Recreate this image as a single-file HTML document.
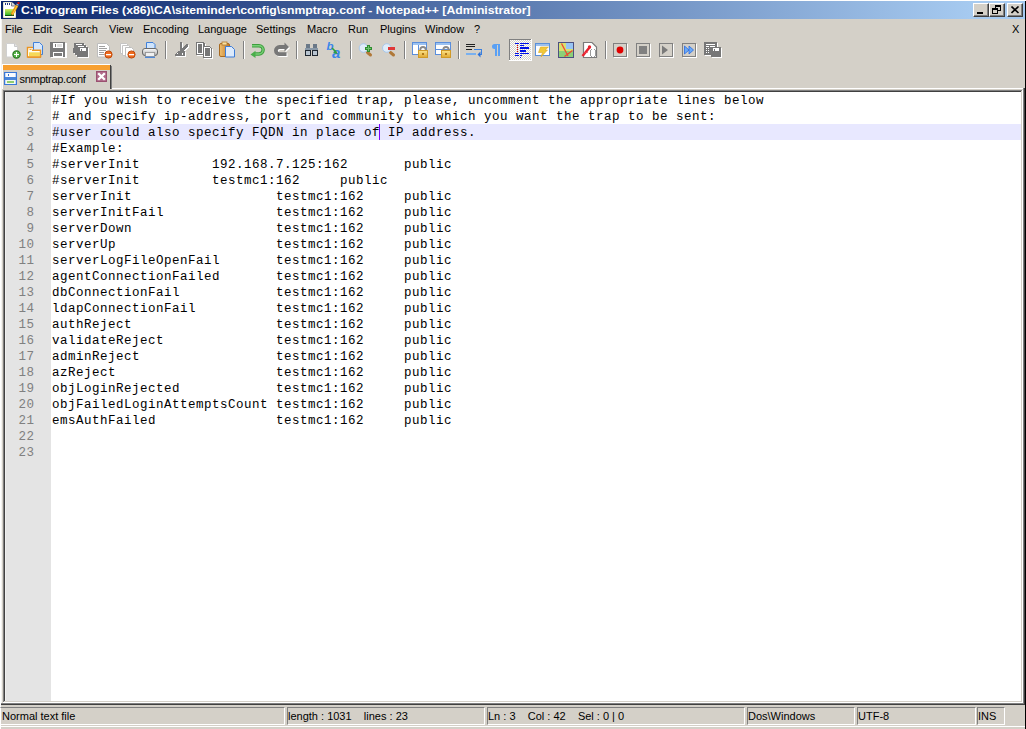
<!DOCTYPE html>
<html><head><meta charset="utf-8">
<style>
*{margin:0;padding:0;box-sizing:border-box}
html,body{width:1026px;height:729px;overflow:hidden;background:#D4D0C8;font-family:"Liberation Sans",sans-serif;position:relative}
.a{position:absolute}
#title{left:1px;top:1px;width:1024px;height:18px;background:linear-gradient(to right,#0A246A 0px,#A6CAF0 970px)}
#ttext{left:21px;top:3px;color:#fff;font-weight:bold;font-size:11px;white-space:pre;line-height:14px;transform:scaleX(1.11);transform-origin:0 0}
.wb{top:3px;width:16px;height:14px;background:#D4D0C8;border-top:1px solid #fff;border-left:1px solid #fff;border-right:1px solid #404040;border-bottom:1px solid #404040;box-shadow:inset -1px -1px 0 #808080}
.menu{top:22px;font-size:11px;line-height:14px;color:#000;white-space:pre}
#content{left:5px;top:92px;width:1016px;height:609px;background:#fff;overflow:hidden}
#margin{left:0;top:0;width:46px;height:609px;background:#E4E4E4}
#hl{left:47px;top:32px;width:969px;height:16px;background:#E8E8FF}
#nums{left:0;top:1px;width:29.5px;text-align:right;font-family:"Liberation Mono",monospace;font-size:12.5px;letter-spacing:0.5px;line-height:16px;color:#808080;white-space:pre}
#code{left:47px;top:1px;font-family:"Liberation Mono",monospace;font-size:12.5px;letter-spacing:0.5px;line-height:16px;color:#000;white-space:pre}
#caret{left:374px;top:32px;width:1px;height:16px;background:#8000FF}
.sp{top:707px;height:18px;border-top:1px solid #808080;border-left:1px solid #808080;border-right:1px solid #fff;border-bottom:1px solid #fff;font-size:11px;line-height:16px;white-space:pre;padding-left:0}
</style></head><body>
<div class="a" style="left:0px;top:0px;width:1026px;height:1px;background:#fff"></div>
<div class="a" style="left:0px;top:0px;width:1px;height:729px;background:#fff"></div>
<div class="a" style="left:1px;top:19px;width:1px;height:684px;background:#F4F3F0"></div>
<div class="a" style="left:1025px;top:1px;width:1px;height:728px;background:#000"></div>
<div class="a" style="left:112px;top:88px;width:911px;height:1px;background:#fff"></div>
<div class="a" style="left:3px;top:90px;width:1020px;height:1px;background:#808080"></div>
<div class="a" style="left:3px;top:90px;width:1px;height:613px;background:#808080"></div>
<div class="a" style="left:4px;top:91px;width:1018px;height:1px;background:#404040"></div>
<div class="a" style="left:4px;top:91px;width:1px;height:611px;background:#404040"></div>
<div class="a" style="left:1021px;top:91px;width:1px;height:611px;background:#D4D0C8"></div>
<div class="a" style="left:4px;top:701px;width:1018px;height:1px;background:#D4D0C8"></div>
<div class="a" style="left:1022px;top:90px;width:1px;height:613px;background:#fff"></div>
<div class="a" style="left:3px;top:702px;width:1020px;height:1px;background:#fff"></div>
<div class="a" style="left:1023px;top:88px;width:1px;height:616px;background:#808080"></div>
<div class="a" style="left:1024px;top:88px;width:1px;height:617px;background:#404040"></div>
<div class="a" style="left:1px;top:703px;width:1023px;height:1px;background:#808080"></div>
<div class="a" style="left:1px;top:704px;width:1024px;height:1px;background:#404040"></div>
<div class="a" style="left:1px;top:726px;width:1024px;height:1px;background:#fff"></div>
<div class="a" id="title"></div>
<svg class="a" style="left:3px;top:2px" width="17" height="16">
<defs><linearGradient id="ag" x1="0" y1="0" x2="0" y2="1"><stop offset="0" stop-color="#D8EC60"/><stop offset="1" stop-color="#38B828"/></linearGradient></defs>
<path d="M0.5 0.5h8.5l3.5 3.5v11.5h-12z" fill="#fff" stroke="#E8E8D0"/>
<path d="M8.5 0.5v3.5h3.5" fill="#D8D8E0" stroke="#606070" stroke-width="0.8"/>
<g shape-rendering="crispEdges"><rect x="2" y="7" width="9" height="6" fill="url(#ag)"/><rect x="2" y="13" width="9" height="1" fill="#0E5A0E"/>
<g fill="#283A80"><rect x="2" y="1" width="1" height="2"/><rect x="4" y="1" width="1" height="2"/><rect x="6" y="1" width="1" height="2"/></g></g>
<path d="M8.8 12.8l5.2-9.3" stroke="#E89A10" stroke-width="2.8"/><path d="M9.3 12.5l4.9-8.8" stroke="#FFD040" stroke-width="1"/>
<path d="M14.2 3.2l0.6-1" stroke="#A0B0C8" stroke-width="2.4"/>
<rect x="14.5" y="0" width="2" height="2" fill="#D01010"/>
<path d="M8.3 13.6l0.6-1.2" stroke="#604020" stroke-width="1.2"/>
</svg>
<div class="a" id="ttext">C:\Program Files (x86)\CA\siteminder\config\snmptrap.conf - Notepad++ [Administrator]</div>
<div class="a wb" style="left:973px"><div class="a" style="left:3px;top:8px;width:6px;height:2px;background:#000"></div></div>
<div class="a wb" style="left:989px">
<div class="a" style="left:5px;top:1px;width:6px;height:6px;border:1px solid #000;border-top-width:2px"></div>
<div class="a" style="left:2px;top:4px;width:6px;height:6px;border:1px solid #000;border-top-width:2px;background:#D4D0C8"></div>
</div>
<div class="a wb" style="left:1007px"><svg class="a" style="left:3px;top:2px" width="9" height="8"><path d="M0.5 0.5l7 6.5M7.5 0.5l-7 6.5" stroke="#000" stroke-width="1.6"/></svg></div>
<div class="a menu" style="left:5px">File</div>
<div class="a menu" style="left:33px">Edit</div>
<div class="a menu" style="left:63px">Search</div>
<div class="a menu" style="left:109px">View</div>
<div class="a menu" style="left:143px">Encoding</div>
<div class="a menu" style="left:198px">Language</div>
<div class="a menu" style="left:256px">Settings</div>
<div class="a menu" style="left:307px">Macro</div>
<div class="a menu" style="left:348px">Run</div>
<div class="a menu" style="left:380px">Plugins</div>
<div class="a menu" style="left:425px">Window</div>
<div class="a menu" style="left:474px">?</div>
<div class="a menu" style="left:1012px">X</div>
<svg class="a" style="left:0;top:0" width="760" height="64">
<defs>
<pattern id="chk" x="0" y="0" width="2" height="2" patternUnits="userSpaceOnUse"><rect width="2" height="2" fill="#D4D0C8"/><rect width="1" height="1" fill="#fff"/><rect x="1" y="1" width="1" height="1" fill="#fff"/></pattern>
<linearGradient id="fold" x1="0" y1="0" x2="0" y2="1"><stop offset="0" stop-color="#FCEAA8"/><stop offset="1" stop-color="#F2C040"/></linearGradient>
<linearGradient id="clip" x1="0" y1="0" x2="1" y2="0"><stop offset="0" stop-color="#F0C070"/><stop offset="1" stop-color="#C07828"/></linearGradient>
<linearGradient id="prn" x1="0" y1="0" x2="0" y2="1"><stop offset="0" stop-color="#FFFFFF"/><stop offset="1" stop-color="#A8A8A8"/></linearGradient>
<linearGradient id="gold" x1="0" y1="0" x2="0" y2="1"><stop offset="0" stop-color="#FBE38A"/><stop offset="1" stop-color="#E0A830"/></linearGradient>
</defs>
<g shape-rendering="crispEdges">
<!-- separators -->
<g fill="#808080"><rect x="165" y="41" width="1" height="18"/><rect x="243" y="41" width="1" height="18"/><rect x="296" y="41" width="1" height="18"/><rect x="350" y="41" width="1" height="18"/><rect x="404" y="41" width="1" height="18"/><rect x="458" y="41" width="1" height="18"/><rect x="605" y="41" width="1" height="18"/></g>
<g fill="#fff"><rect x="166" y="41" width="1" height="18"/><rect x="244" y="41" width="1" height="18"/><rect x="297" y="41" width="1" height="18"/><rect x="351" y="41" width="1" height="18"/><rect x="405" y="41" width="1" height="18"/><rect x="459" y="41" width="1" height="18"/><rect x="606" y="41" width="1" height="18"/></g>
</g>
<!-- New -->
<path d="M6.5 43.5h8l3 3v10.5h-11z" fill="#fff" stroke="#D0D0D0"/>
<path d="M14.5 43.5v3h3" fill="#E4E4E4" stroke="#C8C8C8"/>
<circle cx="16.5" cy="54.5" r="3.6" fill="#5CB84C" stroke="#2A7A22" stroke-width="1.2"/>
<g shape-rendering="crispEdges" fill="#fff"><rect x="16" y="52" width="1" height="5"/><rect x="14" y="54" width="5" height="1"/></g>
<!-- Open -->
<rect x="27.5" y="47.5" width="13" height="9.5" fill="#FFFDF0" stroke="#EC9420" stroke-width="1.4"/>
<path d="M33.5 42.5h6l3 3v9h-9z" fill="#D6E6FA" stroke="#3F80DA"/>
<path d="M28.2 50.3h12.3v6.7h-12.3z" fill="#FFFDF0"/>
<rect x="29" y="52.3" width="10.8" height="4.2" fill="#F6D858"/>
<path d="M32 50.3h9.2M40.5 50v7M27.5 57h13.5" stroke="#EC9420" stroke-width="1.4"/>
<path d="M29.5 49.5h2" stroke="#F0A040" stroke-width="1"/>
<!-- Save (disabled) -->
<g shape-rendering="crispEdges">
<path d="M51 43h16v15h-16z" fill="#fff"/>
<path d="M50 42h15v15h-15z" fill="#7A7A7A"/>
<rect x="53" y="43" width="10" height="5" fill="#fff"/><rect x="55" y="44" width="1" height="3" fill="#7A7A7A"/><rect x="57" y="44" width="5" height="3" fill="#E0E0E0"/>
<rect x="53" y="52" width="10" height="5" fill="#fff"/><rect x="54" y="53" width="8" height="3" fill="#7A7A7A"/>
<!-- Save all -->
<path d="M75 44h10v2h2v2h2v10h-11v-2h-2v-2h-2z" fill="#fff"/>
<path d="M74 43h10v2h2v2h2v10h-11v-2h-2v-2h-2z" fill="#777"/>
<rect x="76" y="44" width="6" height="1" fill="#fff"/><rect x="78" y="46" width="6" height="1" fill="#fff"/><rect x="80" y="48" width="6" height="3" fill="#fff"/><rect x="81" y="49" width="1" height="2" fill="#777"/>
</g>
<!-- Close -->
<path d="M97.5 43.5h9l3 3v10.5h-12z" fill="#fff" stroke="#BDBDBD"/>
<g shape-rendering="crispEdges" fill="#A0A0A0"><rect x="99" y="46" width="6" height="1"/><rect x="99" y="48" width="8" height="1"/><rect x="99" y="50" width="7" height="1"/><rect x="99" y="52" width="5" height="1"/><rect x="99" y="54" width="5" height="1"/></g>
<circle cx="108.5" cy="54.5" r="3.6" fill="#EE6A1E" stroke="#C04A0A"/>
<rect x="106" y="54" width="5" height="1.3" fill="#fff"/>
<!-- Close all -->
<path d="M120.5 43.5h6l2 2v8h-8z" fill="#fff" stroke="#C4C4C4"/>
<path d="M122.5 45.5h6l2 2v8h-8z" fill="#fff" stroke="#C4C4C4"/>
<path d="M125.5 47.5h6l2 2v7.5h-8z" fill="#fff" stroke="#BDBDBD"/>
<circle cx="131.5" cy="54.5" r="3.6" fill="#EE6A1E" stroke="#C04A0A"/>
<rect x="129" y="54" width="5" height="1.3" fill="#fff"/>
<!-- Print -->
<path d="M146.5 42.5h6.5l2 2v5.5h-8.5z" fill="#CFE4FC" stroke="#3F80DA"/>
<rect x="142.5" y="48.5" width="15" height="7" rx="2.5" fill="url(#prn)" stroke="#6A6A6A"/>
<rect x="145.5" y="52.5" width="9" height="4" fill="#F0F0F0" stroke="#909090" stroke-width="0.8"/>
<path d="M145 57.3h10" stroke="#3F80DA" stroke-width="1.2"/>
<!-- Cut disabled -->
<g shape-rendering="crispEdges">
<g fill="#fff" transform="translate(1,1)"><rect x="180" y="42" width="2" height="10"/><path d="M186 44h2v2l-4 5h-2v-2z"/><path d="M178 51h7v5h-10v-2z"/></g>
<g fill="#7A7A7A"><rect x="180" y="42" width="2" height="10"/><path d="M186 44h2v2l-4 5h-2v-2z"/><path d="M178 51h7v5h-10v-2z"/></g>
<rect x="177" y="53" width="1" height="1" fill="#fff"/><rect x="182" y="53" width="1" height="2" fill="#fff"/>
<!-- Copy disabled -->
<path d="M197 43h7l2 2v11h-9z" fill="#fff"/>
<path d="M196 42h7l2 2v11h-9z" fill="#777"/><rect x="197" y="43" width="6" height="11" fill="#fff"/><rect x="198" y="44" width="4" height="9" fill="#777"/>
<path d="M204 47h6l3 3v9h-9z" fill="#fff"/>
<path d="M203 46h6l3 3v9h-9z" fill="#777"/><path d="M204 47h5l2 2v8h-7z" fill="#fff"/><path d="M205 48h4l1 1v7h-5z" fill="#777"/>
</g>
<!-- Paste -->
<rect x="219.5" y="43.5" width="10" height="13" rx="1.5" fill="url(#clip)" stroke="#A86A20"/>
<rect x="222" y="42" width="5" height="3" fill="#F8E0A0" stroke="#B07830" stroke-width="0.8"/>
<path d="M225.5 46.5h6l3 3v7.5h-9z" fill="#DCEAFC" stroke="#3C7CD8"/>
<!-- Undo -->
<path d="M252 45.7h7a4.1 4.1 0 0 1 0 8.3h-4" fill="none" stroke="#3E9E3E" stroke-width="3.4"/>
<path d="M252 45.7h7a4.1 4.1 0 0 1 0 8.3h-4" fill="none" stroke="#78D078" stroke-width="1.4"/>
<path d="M250.5 54.5l5-3.8v7.2z" fill="#4AAE4A"/>
<!-- Redo disabled -->
<g>
<path d="M286 48h-5.5a3.6 3.6 0 0 0 0 7.2h7" fill="none" stroke="#fff" stroke-width="3.8"/>
<path d="M290 48l-4.5-4.5v9z" fill="#fff"/>
<path d="M285 47h-5.5a3.6 3.6 0 0 0 0 7.2h7" fill="none" stroke="#777" stroke-width="3.8"/>
<path d="M289 47l-4.5-4.5v9z" fill="#777"/>
</g>
<!-- Find binoculars -->
<g shape-rendering="crispEdges">
<rect x="305" y="48" width="6" height="8" fill="#1E2630"/><rect x="312" y="48" width="6" height="8" fill="#1E2630"/>
<rect x="306" y="44" width="4" height="4" fill="#6A7888"/><rect x="313" y="44" width="4" height="4" fill="#6A7888"/>
<rect x="305" y="48" width="13" height="2" fill="#8898A8"/>
<rect x="306" y="51" width="4" height="4" fill="#B8C4D0"/><rect x="313" y="51" width="4" height="4" fill="#B8C4D0"/>
</g>
<!-- Replace -->
<text x="326.5" y="50" font-family="Liberation Sans" font-style="italic" font-weight="bold" font-size="11.5" fill="#3A86EA">b</text>
<text x="332" y="57.5" font-family="Liberation Sans" font-style="italic" font-weight="bold" font-size="15" fill="#3A86EA">a</text>
<path d="M332 48l3.5 3.5" stroke="#30A040" stroke-width="1.6"/><path d="M337.5 54l-4.5-1 3-3z" fill="#30A040"/>
<!-- Zoom in -->
<path d="M367.5 52.5l3 2.5" stroke="#B07838" stroke-width="3" stroke-linecap="round"/>
<circle cx="363.5" cy="48" r="4.3" fill="#E0ECF8" stroke="#A8C8EC"/>
<g shape-rendering="crispEdges" fill="#2E8E2E"><rect x="367" y="45" width="3" height="7"/><rect x="365" y="47" width="7" height="3"/></g>
<g shape-rendering="crispEdges" fill="#70C070"><rect x="368" y="46" width="1" height="5"/><rect x="366" y="48" width="5" height="1"/></g>
<!-- Zoom out -->
<path d="M390.5 52.5l3 2.5" stroke="#B07838" stroke-width="3" stroke-linecap="round"/>
<circle cx="386.8" cy="48" r="4.3" fill="#E0ECF8" stroke="#A8C8EC"/>
<rect x="388" y="47" width="7" height="3" fill="#E03838" shape-rendering="crispEdges"/>
<!-- Sync V -->
<g shape-rendering="crispEdges">
<rect x="412" y="42" width="15" height="13" fill="#5A8EDC"/><rect x="413" y="43" width="13" height="2" fill="#9CC2F0"/><rect x="413" y="45" width="13" height="9" fill="#fff"/><rect x="418" y="45" width="1" height="9" fill="#5A8EDC"/>
<rect x="435" y="42" width="16" height="13" fill="#5A8EDC"/><rect x="436" y="43" width="14" height="2" fill="#9CC2F0"/><rect x="436" y="45" width="14" height="9" fill="#fff"/><rect x="436" y="49" width="14" height="1" fill="#5A8EDC"/>
</g>
<path d="M420.3 51.5v-1.8a2.7 2.7 0 0 1 5.4 0v1.8" fill="none" stroke="#8A8A8A" stroke-width="1.8"/>
<rect x="418.5" y="50.5" width="9" height="7" fill="url(#gold)" stroke="#D09A28"/>
<rect x="422" y="53" width="2" height="2" fill="#B07818"/>
<path d="M443.3 51.5v-1.8a2.7 2.7 0 0 1 5.4 0v1.8" fill="none" stroke="#8A8A8A" stroke-width="1.8"/>
<rect x="441.5" y="50.5" width="9" height="7" fill="url(#gold)" stroke="#D09A28"/>
<rect x="445" y="53" width="2" height="2" fill="#B07818"/>
<!-- Word wrap -->
<g shape-rendering="crispEdges">
<rect x="466" y="44" width="9" height="1" fill="#202020"/><rect x="466" y="46" width="9" height="1" fill="#202020"/><rect x="466" y="49" width="6" height="1" fill="#202020"/>
<rect x="466" y="53" width="10" height="2" fill="#78B0F0"/>
<rect x="474" y="49" width="8" height="1" fill="#3A80E0"/><rect x="481" y="49" width="1" height="6" fill="#3A80E0"/><rect x="479" y="54" width="2" height="1" fill="#3A80E0"/>
</g>
<path d="M477.5 54.5l3-3v6z" fill="#2A70D8"/>
<!-- Pilcrow -->
<path d="M494.5 44h5.5v12h-2v-11h-1v11h-2v-7h-0.5a2.5 2.5 0 0 1 0-5z" fill="#5AA0F4"/>
<!-- Pressed indent guide -->
<g shape-rendering="crispEdges">
<rect x="509" y="39" width="23" height="22" fill="#fff"/>
<rect x="509" y="39" width="22" height="21" fill="#808080"/>
<rect x="510" y="40" width="21" height="20" fill="url(#chk)"/>
<g fill="#0010E8">
<rect x="515" y="43" width="4" height="1"/><rect x="520" y="43" width="9" height="1"/>
<rect x="520" y="45" width="4" height="1"/>
<rect x="520" y="47" width="9" height="2"/>
<rect x="520" y="50" width="6" height="2"/>
<rect x="515" y="53" width="4" height="1"/><rect x="520" y="53" width="9" height="1"/>
<rect x="515" y="55" width="4" height="1"/><rect x="520" y="55" width="2" height="1"/>
<rect x="520" y="57" width="1" height="1"/>
</g>
<g fill="#E00000"><rect x="517" y="45" width="1" height="1"/><rect x="517" y="47" width="1" height="1"/><rect x="517" y="49" width="1" height="1"/><rect x="517" y="51" width="1" height="1"/></g>
<!-- UDL -->
<rect x="535" y="43" width="15" height="13" fill="#5A90DA"/><rect x="536" y="46" width="13" height="9" fill="#fff"/><rect x="536" y="44" width="13" height="2" fill="#9CC0EE"/>
</g>
<path d="M540.5 47h8l-3.5 3h2.5l-6.5 7 1.5-4.5h-4z" fill="#F2C838" stroke="#D8A828" stroke-width="0.6"/>
<!-- Doc map -->
<g shape-rendering="crispEdges">
<rect x="558" y="42" width="16" height="16" fill="#4C5080"/>
<rect x="559" y="43" width="14" height="14" fill="#D8E070"/>
<rect x="566" y="43" width="7" height="6" fill="#98C4F4"/>
<rect x="559" y="51" width="14" height="6" fill="#8CD078"/>
</g>
<path d="M561.5 43.5l6.5 12.5M572.5 50.5l-8 6" stroke="#F04830" stroke-width="1.3"/>
<!-- Function list -->
<path d="M583.5 42.5h8.5l4.5 4.5v10.5h-13z" fill="#fff" stroke="#7A7A7A" stroke-width="1.2"/>
<path d="M582.5 56l7-8.5" stroke="#E8202C" stroke-width="2.4"/><circle cx="589.5" cy="47" r="1.7" fill="#E8202C"/>
<path d="M584 53l4-1" stroke="#F04050" stroke-width="1"/>
<g shape-rendering="crispEdges" fill="#9A9A9A"><rect x="590" y="50" width="1" height="6"/><rect x="591" y="49" width="1" height="1"/><rect x="591" y="56" width="1" height="1"/><rect x="595" y="50" width="1" height="6"/><rect x="594" y="49" width="1" height="1"/><rect x="594" y="56" width="1" height="1"/></g>
<!-- Macro buttons -->
<g shape-rendering="crispEdges">
<rect x="614" y="44" width="14" height="14" fill="#fff"/><rect x="613" y="43" width="14" height="14" fill="#808080"/><rect x="614" y="44" width="12" height="12" fill="#D4D0C8"/>
<rect x="637" y="44" width="14" height="14" fill="#fff"/><rect x="636" y="43" width="14" height="14" fill="#808080"/><rect x="637" y="44" width="12" height="12" fill="#D4D0C8"/><rect x="639" y="46" width="8" height="8" fill="#808080"/>
<rect x="660" y="44" width="14" height="14" fill="#fff"/><rect x="659" y="43" width="14" height="14" fill="#808080"/><rect x="660" y="44" width="12" height="12" fill="#D4D0C8"/>
<rect x="683" y="44" width="14" height="14" fill="#fff"/><rect x="682" y="43" width="14" height="14" fill="#808080"/><rect x="683" y="44" width="12" height="12" fill="#D4D0C8"/>
</g>
<circle cx="620" cy="50" r="3.4" fill="#E00000"/>
<path d="M662 45.5v9l6 -4.5z" fill="#7A7A7A"/>
<path d="M684.5 46v8l4.5-4zM689 46v8l4.5-4z" fill="#6AAAF8" stroke="#2A6AE0" stroke-width="0.8"/>
<!-- Save macro -->
<g shape-rendering="crispEdges">
<rect x="705" y="43" width="13" height="13" fill="#fff"/>
<rect x="704" y="42" width="13" height="13" fill="#777"/>
<rect x="706" y="44" width="9" height="1" fill="#fff"/><rect x="706" y="46" width="3" height="1" fill="#fff"/><rect x="710" y="46" width="5" height="1" fill="#fff"/>
<rect x="706" y="48" width="1" height="1" fill="#fff"/><rect x="706" y="50" width="1" height="1" fill="#fff"/><rect x="706" y="52" width="1" height="1" fill="#fff"/><rect x="708" y="48" width="1" height="1" fill="#fff"/><rect x="708" y="50" width="1" height="1" fill="#fff"/><rect x="708" y="52" width="1" height="1" fill="#fff"/>
<rect x="712" y="48" width="10" height="10" fill="#fff"/>
<rect x="711" y="47" width="10" height="10" fill="#777"/>
<rect x="713" y="48" width="6" height="3" fill="#fff"/><rect x="714" y="49" width="1" height="2" fill="#777"/>
</g>
</svg>
<!-- tab -->
<div class="a" style="left:2px;top:64px;width:109px;height:25px;background:#D4D0C8"></div>
<div class="a" style="left:2px;top:64px;width:108px;height:1px;background:#fff"></div>
<div class="a" style="left:2px;top:64px;width:1px;height:25px;background:#fff"></div>
<div class="a" style="left:3px;top:65px;width:107px;height:5px;background:#F8A030"></div>
<div class="a" style="left:110px;top:65px;width:1px;height:24px;background:#404040"></div>
<div class="a" style="left:111px;top:66px;width:1px;height:23px;background:#808080"></div>
<svg class="a" style="left:4px;top:72px" width="13" height="13" shape-rendering="crispEdges">
<rect x="0" y="0" width="13" height="13" fill="#3A78D8"/>
<rect x="1" y="1" width="11" height="11" fill="#C4DAF8"/>
<rect x="2" y="1" width="9" height="4" fill="#FAFCFF"/><rect x="4" y="2" width="1" height="2" fill="#3A70C8"/>
<rect x="1" y="5" width="11" height="3" fill="#4A86DA"/>
<rect x="2" y="8" width="9" height="4" fill="#F4FAF0"/><rect x="3" y="9" width="7" height="2" fill="#90CC70"/>
</svg>
<div class="a" style="left:19.5px;top:72px;font-size:11px;letter-spacing:-0.28px;line-height:14px;white-space:pre">snmptrap.conf</div>
<svg class="a" style="left:96px;top:71px" width="11" height="11">
<rect x="0.5" y="0.5" width="10" height="10" fill="#B06A8A" stroke="#9A5070"/>
<path d="M2.2 2.2l6.6 6.6M8.8 2.2l-6.6 6.6" stroke="#fff" stroke-width="2.3"/>
</svg>
<!-- editor -->
<div class="a" id="content">
<div class="a" id="margin"></div>
<div class="a" style="left:0;top:0;width:1px;height:609px;background:#F0F0F0"></div>
<div class="a" id="hl"></div>
<div class="a" id="nums"> 1
 2
 3
 4
 5
 6
 7
 8
 9
10
11
12
13
14
15
16
17
18
19
20
21
22
23</div>
<div class="a" id="code">#If you wish to receive the specified trap, please, uncomment the appropriate lines below
# and specify ip-address, port and community to which you want the trap to be sent:
#user could also specify FQDN in place of IP address.
#Example:
#serverInit         192.168.7.125:162       public
#serverInit         testmc1:162     public
serverInit                  testmc1:162     public
serverInitFail              testmc1:162     public
serverDown                  testmc1:162     public
serverUp                    testmc1:162     public
serverLogFileOpenFail       testmc1:162     public
agentConnectionFailed       testmc1:162     public
dbConnectionFail            testmc1:162     public
ldapConnectionFail          testmc1:162     public
authReject                  testmc1:162     public
validateReject              testmc1:162     public
adminReject                 testmc1:162     public
azReject                    testmc1:162     public
objLoginRejected            testmc1:162     public
objFailedLoginAttemptsCount testmc1:162     public
emsAuthFailed               testmc1:162     public</div>
<div class="a" id="caret"></div>
</div>
<div class="a sp" style="left:0;width:285px;border-left-color:#fff;padding-left:1px">Normal text file</div>
<div class="a sp" style="left:287px;width:198px">length : 1031    lines : 23</div>
<div class="a sp" style="left:487px;width:258px">Ln : 3    Col : 42    Sel : 0 | 0</div>
<div class="a sp" style="left:747px;width:108px">Dos\Windows</div>
<div class="a sp" style="left:857px;width:119px">UTF-8</div>
<div class="a sp" style="left:977px;width:28px">INS</div>
</body></html>
